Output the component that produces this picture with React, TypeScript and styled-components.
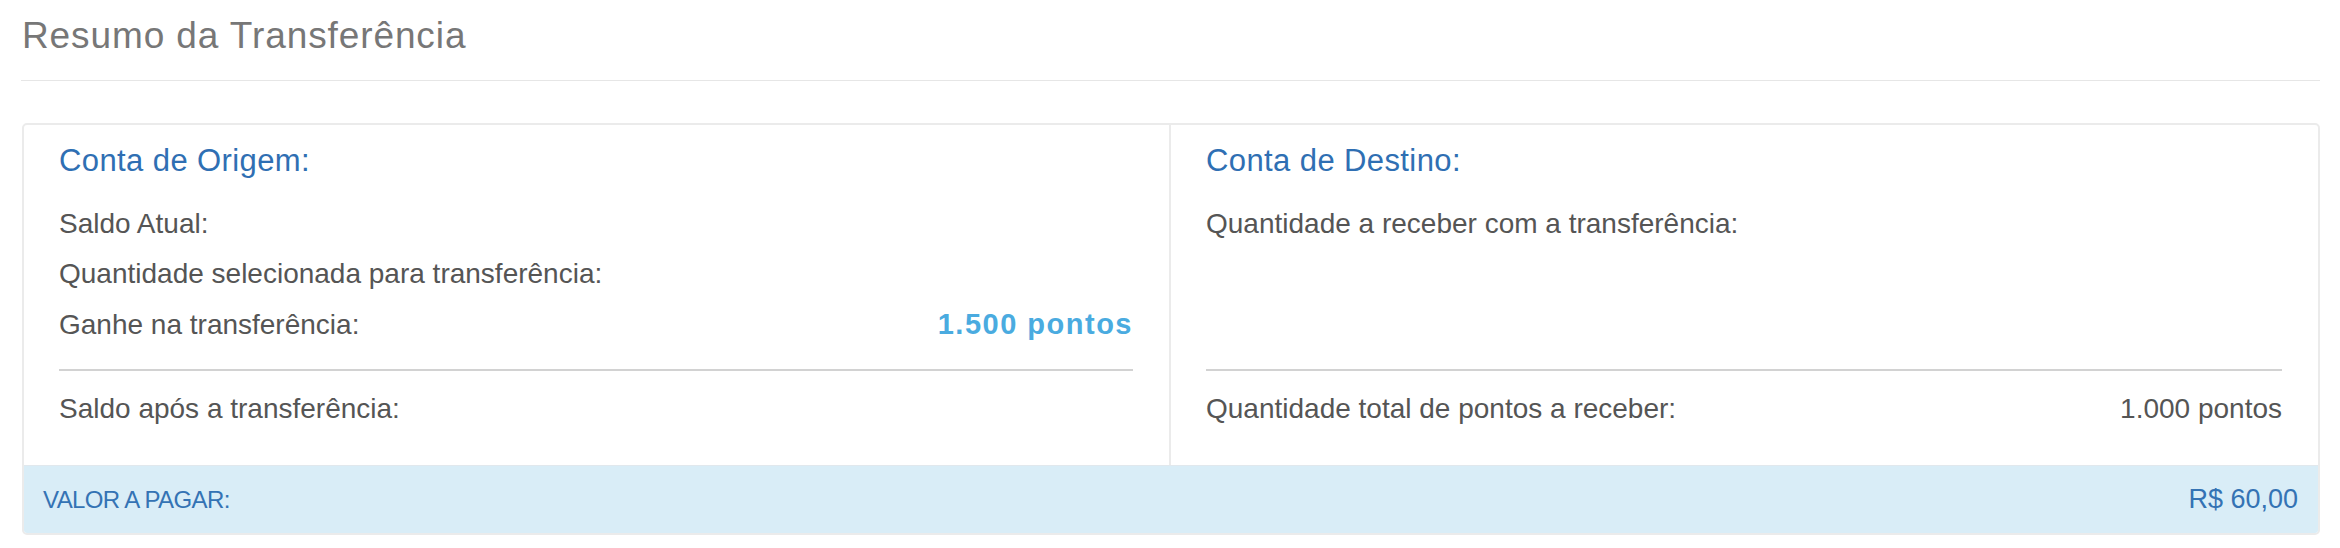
import React from 'react'
import styled, { createGlobalStyle } from 'styled-components'

const GlobalStyle = createGlobalStyle`
    html, body {
        margin: 0;
        padding: 0;
        background: #fff;
    }

    body {
        font-family: "Liberation Sans", Arial, Helvetica, sans-serif;
        color: #555;
    }
`

const Page = styled.div`
    padding: 0 20px 0 21px;
`

const PageTitle = styled.h1`
    margin: 15px 0 0;
    padding: 0 0 24px 1px;
    font-size: 37px;
    line-height: 41px;
    font-weight: 400;
    letter-spacing: 0.9px;
    color: #777;
    border-bottom: 1px solid #e6e6e6;
`

const SummaryCard = styled.div`
    margin: 42px 0 0 1px;
    border: 2px solid #ebebeb;
    border-radius: 5px;
    overflow: hidden;
    background: #fff;
`

const Columns = styled.div`
    display: grid;
    grid-template-columns: 1fr 1fr;
`

interface ColumnProps {
    divider?: boolean
}

const Column = styled.div<ColumnProps>`
    display: flex;
    flex-direction: column;
    padding: 16px 36px 31px 35px;
    border-right: ${props => (props.divider ? '2px solid #ebebeb' : 'none')};
`

const ColumnTitle = styled.h2`
    margin: 0 0 18px;
    font-size: 31px;
    line-height: 40px;
    font-weight: 400;
    letter-spacing: 0.4px;
    color: #2f6fb3;
`

const Rows = styled.div`
    display: flex;
    flex-direction: column;
`

const Row = styled.div`
    display: flex;
    justify-content: space-between;
    align-items: baseline;
    font-size: 28px;
    line-height: 50px;
    color: #555;
`

const Highlight = styled.span`
    font-size: 29px;
    font-weight: 700;
    letter-spacing: 1.5px;
    color: #4aabe0;
`

const Separator = styled.hr`
    margin: auto 0 13px;
    border: 0;
    border-top: 2px solid #d2d2d2;
    width: 100%;
`

const Spacer = styled.div`
    height: 19px;
`

const PayBar = styled.div`
    display: flex;
    justify-content: space-between;
    align-items: center;
    height: 67px;
    padding: 0 20px 0 19px;
    background: #d9edf7;
    border-top: 1px solid #e1e8ed;
    color: #3473b4;
`

const PayLabel = styled.span`
    font-size: 24px;
    letter-spacing: -0.6px;
`

const PayValue = styled.span`
    font-size: 27px;
`

const origin = [
    { label: 'Saldo Atual:' },
    { label: 'Quantidade selecionada para transferência:' },
    { label: 'Ganhe na transferência:', value: '1.500 pontos' },
]

const App = () => (
    <>
        <GlobalStyle />
        <Page>
            <PageTitle>Resumo da Transferência</PageTitle>
            <SummaryCard>
                <Columns>
                    <Column divider>
                        <ColumnTitle>Conta de Origem:</ColumnTitle>
                        <Rows>
                            {origin.map(item => (
                                <Row key={item.label}>
                                    <span>{item.label}</span>
                                    {item.value && <Highlight>{item.value}</Highlight>}
                                </Row>
                            ))}
                        </Rows>
                        <Spacer />
                        <Separator />
                        <Row>
                            <span>Saldo após a transferência:</span>
                        </Row>
                    </Column>
                    <Column>
                        <ColumnTitle>Conta de Destino:</ColumnTitle>
                        <Rows>
                            <Row>
                                <span>Quantidade a receber com a transferência:</span>
                            </Row>
                        </Rows>
                        <Separator />
                        <Row>
                            <span>Quantidade total de pontos a receber:</span>
                            <span>1.000 pontos</span>
                        </Row>
                    </Column>
                </Columns>
                <PayBar>
                    <PayLabel>VALOR A PAGAR:</PayLabel>
                    <PayValue>R$ 60,00</PayValue>
                </PayBar>
            </SummaryCard>
        </Page>
    </>
)

export default App
